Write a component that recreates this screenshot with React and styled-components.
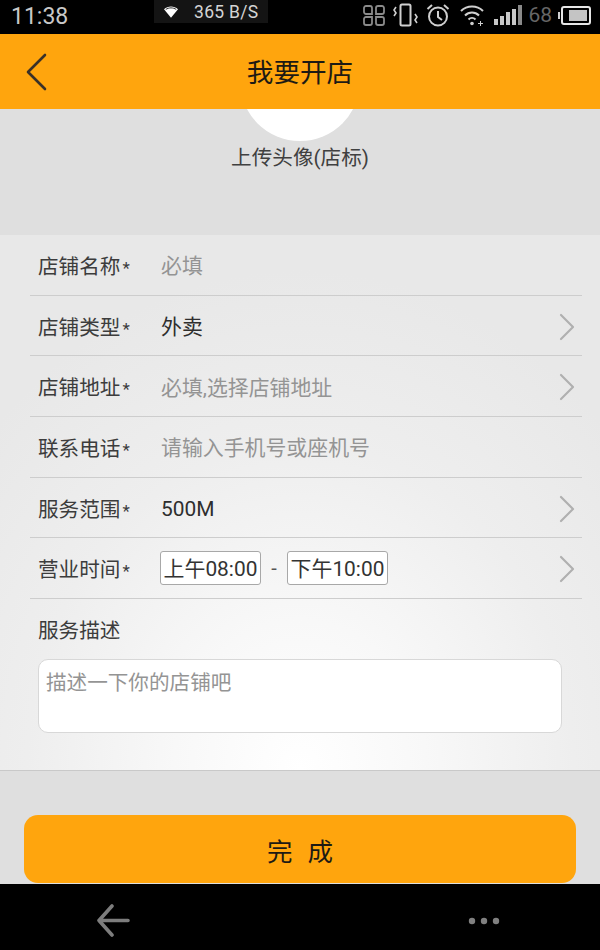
import styled, { createGlobalStyle } from 'styled-components';

const FONT = '"Roboto", "Liberation Sans", "Noto Sans CJK SC", sans-serif';

const GlobalStyle = createGlobalStyle`
  html, body {
    margin: 0;
    padding: 0;
    background: #000;
  }
  * {
    box-sizing: border-box;
  }
`;

const Phone = styled.div`
  width: 600px;
  height: 950px;
  display: flex;
  flex-direction: column;
  overflow: hidden;
  background: #dfdfdf;
  font-family: ${FONT};
  color: #2e2e2e;
`;

const StatusBar = styled.div`
  height: 34px;
  flex: none;
  background: #000;
  display: flex;
  align-items: flex-start;
  padding: 0 9px 0 11px;
`;

const Clock = styled.div`
  width: 143px;
  font-size: 23px;
  line-height: 33px;
  color: #c8c8c8;
`;

const NetBubble = styled.div`
  width: 114px;
  height: 23px;
  background: #141414;
  display: flex;
  align-items: center;
  color: #d4d4d4;
  font-size: 17.5px;
  letter-spacing: 0.3px;

  & svg {
    margin: 0 16px 0 10px;
  }
`;

const StatusIcons = styled.div`
  margin-left: auto;
  height: 30px;
  display: flex;
  align-items: center;
  gap: 9px;
`;

const StatusIcon = styled.svg`
  margin-left: ${props => props.$shift || 0}px;
`;

const Level = styled.span`
  font-size: 21px;
  color: #666;
  margin: 0 -3px 0 -3px;
`;

const Header = styled.header`
  height: 75px;
  flex: none;
  background: #ffa50d;
  display: flex;
  align-items: center;
  justify-content: center;
  position: relative;
  padding-bottom: 2px;
  font-size: 26.6px;
  color: #1d1a14;
`;

const BackButton = styled.div`
  position: absolute;
  left: 25px;
  top: 19px;
  line-height: 0;
`;

const AvatarSection = styled.section`
  height: 126px;
  flex: none;
  overflow: hidden;
  display: flex;
  flex-direction: column;
  align-items: center;
`;

const Avatar = styled.div`
  width: 120px;
  height: 120px;
  flex: none;
  margin-top: -88px;
  border-radius: 50%;
  background: #fff;
`;

const AvatarLabel = styled.div`
  margin-top: 3px;
  font-size: 20.6px;
  line-height: 28px;
  color: #404040;
`;

const Form = styled.section`
  height: 536px;
  flex: none;
  padding: 0 18px 0 30px;
  border-bottom: 1px solid #c9c9c9;
  background: radial-gradient(ellipse 420px 500px at 50% 100%, #ffffff 0%, #f8f8f8 30%, #eeeeee 65%, #e8e8e8 100%);
`;

const Row = styled.div`
  height: 60.7px;
  display: flex;
  align-items: center;
  border-bottom: 1px solid #cdcdcd;
  padding: 0 7px 0 8px;
`;

const Label = styled.div`
  width: 122px;
  flex: none;
  margin-top: 5px;
  font-size: 20.6px;
  line-height: 28px;
  color: #3c3c3c;

  & i {
    font-style: normal;
    font-size: 17px;
    margin-left: 2px;
  }
`;

const Value = styled.div`
  flex: 1;
  margin-top: 3px;
  padding-left: 1px;
  font-size: 20.9px;
  line-height: 28px;
  color: ${props => (props.$placeholder ? '#949494' : '#2e2e2e')};
`;

const TimeBox = styled.div`
  width: ${props => props.$width}px;
  height: 34px;
  flex: none;
  background: #fff;
  border: 1px solid #a8a8a8;
  border-radius: 3px;
  font-size: 20.9px;
  line-height: 35px;
  text-align: center;
  color: #333;
  white-space: nowrap;
`;

const Dash = styled.span`
  width: 26px;
  text-align: center;
  font-size: 20px;
  color: #555;
`;

const Chevron = styled.div`
  margin: 2px 0 0 auto;
  line-height: 0;
`;

const DescLabel = styled.div`
  padding: 19px 0 0 8px;
  font-size: 20.6px;
  line-height: 26px;
  color: #3c3c3c;
`;

const TextBox = styled.div`
  width: 524px;
  height: 74px;
  margin: 15px 0 0 8px;
  padding: 9px 7px;
  background: #fff;
  border: 1px solid #d8d8d8;
  border-radius: 10px;
  font-size: 20.6px;
  line-height: 28px;
  color: #949494;
`;

const Footer = styled.div`
  flex: 1;
  display: flex;
  align-items: flex-end;
  padding: 0 24px 1px;
`;

const SubmitButton = styled.div`
  width: 100%;
  height: 68px;
  background: #ffa50d;
  border-radius: 14px;
  display: flex;
  align-items: center;
  justify-content: center;
  gap: 15px;
  font-size: 25.5px;
  color: #1d1a14;
`;

const NavBar = styled.nav`
  height: 66px;
  flex: none;
  background: #000;
  display: flex;
  align-items: center;
  justify-content: space-between;
  padding: 7px 100px 0 96px;
  line-height: 0;
`;

const rows = [
  { label: '店铺名称', value: '必填', placeholder: true },
  { label: '店铺类型', value: '外卖', arrow: true },
  { label: '店铺地址', value: '必填,选择店铺地址', placeholder: true, arrow: true },
  { label: '联系电话', value: '请输入手机号或座机号', placeholder: true },
  { label: '服务范围', value: '500M', arrow: true },
];

const ArrowRight = () => (
  <Chevron>
    <svg width="16" height="28" viewBox="0 0 16 28" fill="none" stroke="#b0b0b0" strokeWidth="2.2" strokeLinecap="round" strokeLinejoin="round">
      <path d="M2 2l12 12L2 26" />
    </svg>
  </Chevron>
);

const App = () => (
  <Phone>
    <GlobalStyle />
    <StatusBar>
      <Clock>11:38</Clock>
      <NetBubble>
        <svg width="14" height="12" viewBox="0 0 16 13">
          <path d="M0 3.4C4.5-.8 11.500-.8 16 3.400L8 13z" fill="#fff" />
          <path d="M2 3.600C5.500 1.200 10.500 1.200 14 3.600" fill="none" stroke="#141414" strokeWidth="1" />
        </svg>
        365 B/S
      </NetBubble>
      <StatusIcons>
        <StatusIcon width="22" height="21" viewBox="0 0 22 21" fill="none" stroke="#8a8a8a" strokeWidth="1.800">
          <path d="M9 9H3a2 2 0 0 1-2-2V3a2 2 0 0 1 2-2h4a2 2 0 0 1 2 2zM13 9h6a2 2 0 0 0 2-2V3a2 2 0 0 0-2-2h-4a2 2 0 0 0-2 2zM9 12H3a2 2 0 0 0-2 2v4a2 2 0 0 0 2 2h4a2 2 0 0 0 2-2zM13 12h6a2 2 0 0 1 2 2v4a2 2 0 0 1-2 2h-4a2 2 0 0 1-2-2z" />
        </StatusIcon>
        <StatusIcon $shift={-1} width="25" height="25" viewBox="0 0 25 25" fill="none" stroke="#cfcfcf" strokeWidth="1.600">
          <rect x="7.500" y="1.500" width="10" height="21" rx="1.500" strokeWidth="2" />
          <path d="M3 4l-2 3 2 3-2 3M22 11l2 3-2 3 2 3" />
        </StatusIcon>
        <StatusIcon $shift={-1} width="24" height="24" viewBox="0 0 24 24" fill="none" stroke="#cfcfcf" strokeWidth="2">
          <circle cx="12" cy="13.500" r="9" />
          <path d="M12 8v6l4 3M1.500 6L6 2M22.500 6L18 2" />
        </StatusIcon>
        <StatusIcon $shift={1} width="24" height="22" viewBox="0 0 24 22" fill="none" stroke="#cfcfcf" strokeWidth="2">
          <path d="M1 7c6-6 16-6 22 0M5 11.500c4-4 10-4 14 0M8.500 15.500c2-2 5-2 7 0" />
          <circle cx="12" cy="19.500" r="1.800" fill="#cfcfcf" stroke="none" />
          <path d="M18 19.500h5M20.500 17v5" strokeWidth="1" />
        </StatusIcon>
        <StatusIcon $shift={1} width="28" height="20" viewBox="0 0 28 20" fill="#c8c8c8">
          <rect x="0" y="14" width="4" height="6" />
          <rect x="6" y="11" width="4" height="9" />
          <rect x="12" y="7" width="4" height="13" />
          <rect x="18" y="4" width="4" height="16" />
          <rect x="24" y="0" width="4" height="20" fill="#8a8a8a" />
        </StatusIcon>
        <Level>68</Level>
        <svg width="33" height="19" viewBox="0 0 33 19">
          <rect x="0" y="6" width="2" height="7" fill="#cfcfcf" />
          <rect x="4" y="1" width="28" height="17" rx="2" fill="none" stroke="#e6e6e6" strokeWidth="2" />
          <rect x="11" y="4" width="18" height="11" fill="#c4c4c4" />
        </svg>
      </StatusIcons>
    </StatusBar>

    <Header>
      <BackButton>
        <svg width="24" height="38" viewBox="0 0 24 38" fill="none" stroke="#3a3128" strokeWidth="2.600" strokeLinecap="round" strokeLinejoin="round">
          <path d="M20 2L3 19l17 17" />
        </svg>
      </BackButton>
      我要开店
    </Header>

    <AvatarSection>
      <Avatar />
      <AvatarLabel>上传头像(店标)</AvatarLabel>
    </AvatarSection>

    <Form>
      {rows.map(row => (
        <Row key={row.label}>
          <Label>
            {row.label}
            <i>*</i>
          </Label>
          <Value $placeholder={row.placeholder}>{row.value}</Value>
          {row.arrow && <ArrowRight />}
        </Row>
      ))}
      <Row>
        <Label>
          营业时间<i>*</i>
        </Label>
        <TimeBox $width={101}>上午08:00</TimeBox>
        <Dash>-</Dash>
        <TimeBox $width={101}>下午10:00</TimeBox>
        <ArrowRight />
      </Row>
      <DescLabel>服务描述</DescLabel>
      <TextBox>描述一下你的店铺吧</TextBox>
    </Form>

    <Footer>
      <SubmitButton>
        <span>完</span>
        <span>成</span>
      </SubmitButton>
    </Footer>

    <NavBar>
      <svg width="35" height="33" viewBox="0 0 35 33" fill="none" stroke="#7d7d7d" strokeWidth="3.600" strokeLinecap="round" strokeLinejoin="round">
        <path d="M16 2L3 16.500 16 31M3 16.500h29" />
      </svg>
      <svg width="32" height="8" viewBox="0 0 32 8" fill="#808080">
        <circle cx="4" cy="4" r="3.200" />
        <circle cx="16" cy="4" r="3.200" />
        <circle cx="28" cy="4" r="3.200" />
      </svg>
    </NavBar>
  </Phone>
);

export default App;
